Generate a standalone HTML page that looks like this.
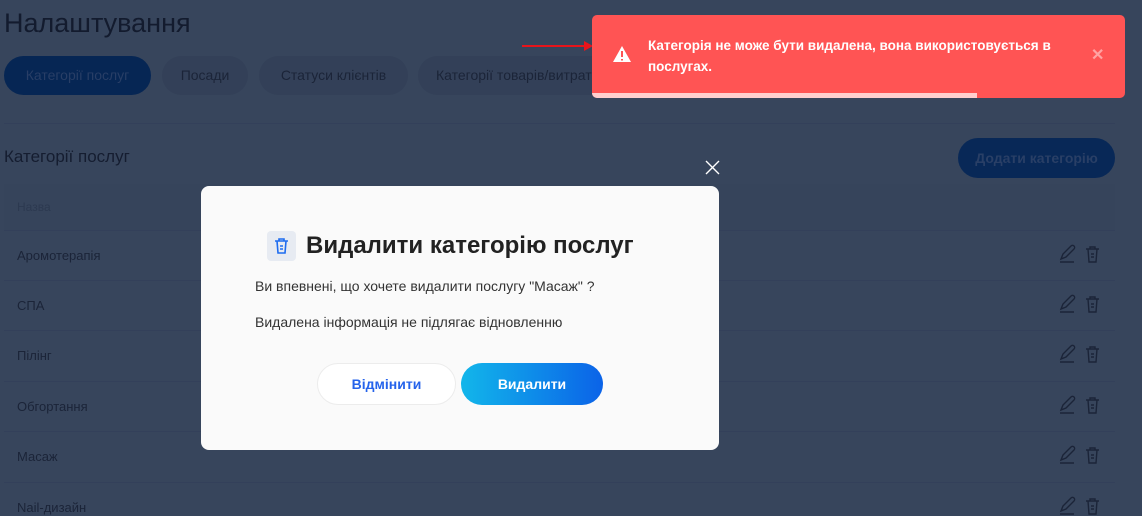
<!DOCTYPE html>
<html style="width:1142px;height:516px;overflow:hidden"><head><meta charset="utf-8"><style>
*{margin:0;padding:0;box-sizing:border-box}
body{width:1142px;height:516px;overflow:hidden;background:#37455c;font-family:"Liberation Sans",Roboto,sans-serif;position:relative;color:#1b2438}
.abs{position:absolute}
h1{position:absolute;left:4px;top:8px;font-size:27px;font-weight:normal;color:#131b2e}
.tab{position:absolute;top:56px;height:39px;border-radius:20px;background:#334058;font-size:14px;color:#1b2438;line-height:39px;text-align:center}
.row{position:absolute;left:4px;width:1111px;height:50px;border-top:1px solid #33405a;font-size:13px;line-height:50px;padding-left:13px;color:#1b2438}
</style></head><body>
<h1>Налаштування</h1>
<div class="tab" style="left:4px;width:147px;background:#062654;color:#283e66">Категорії послуг</div>
<div class="tab" style="left:162px;width:86px">Посади</div>
<div class="tab" style="left:259px;width:149px">Статуси клієнтів</div>
<div class="tab" style="left:418px;width:200px;text-align:left;padding-left:18px">Категорії товарів/витрат</div>
<div class="abs" style="left:4px;top:123px;width:1111px;height:1px;background:#33405a"></div>
<div class="abs" style="left:4px;top:147px;font-size:17px;color:#151d30">Категорії послуг</div>
<div class="abs" style="left:958px;top:138px;width:157px;height:40px;border-radius:20px;background:#082857;color:#293f66;font-size:14px;font-weight:bold;line-height:40px;text-align:center">Додати категорію</div>
<div class="row" style="top:184px;height:46px;line-height:46px;background:#36445b;color:#2c3950;font-size:12px;border-top:none">Назва</div>
<div class="row" style="top:230px">Аромотерапія</div>
<div class="row" style="top:280px">СПА</div>
<div class="row" style="top:330px">Пілінг</div>
<div class="row" style="top:381px">Обгортання</div>
<div class="row" style="top:431px">Масаж</div>
<div class="row" style="top:482px">Nail-дизайн</div>
<svg class="abs" style="left:1055px;top:240px" width="50" height="276" viewBox="0 0 50 276" fill="none" stroke="#1b2438" stroke-width="1.4">
<g id="ic"><path d="M5 22h14M6 19l2-5 8-8a2 2 0 0 1 3 3l-8 8-5 2z"/><path d="M31 9h13M35 9V7h5v2M33 9l1 13h7l1-13M36 14h3M36 17h3"/></g>
<use href="#ic" y="50"/><use href="#ic" y="100"/><use href="#ic" y="151"/><use href="#ic" y="201"/><use href="#ic" y="252"/>
</svg>
<div class="abs" style="left:522px;top:45px;width:66px;height:2px;background:#e8141b"></div>
<div class="abs" style="left:584px;top:41px;width:0;height:0;border-left:9px solid #e8141b;border-top:5px solid transparent;border-bottom:5px solid transparent"></div>
<div class="abs" style="left:592px;top:15px;width:533px;height:83px;border-radius:5px;background:#ff5454;overflow:hidden">
<svg class="abs" style="left:20px;top:30px" width="20" height="18" viewBox="0 0 20 18"><path d="M10 1L19 17H1z" fill="#fff"/><path d="M10 6v6M10 14v1.5" stroke="#ff5454" stroke-width="2"/></svg>
<div class="abs" style="left:56px;top:20px;width:420px;color:#fff;font-size:13.5px;font-weight:bold;line-height:21px">Категорія не може бути видалена, вона використовується в послугах.</div>
<div class="abs" style="left:499px;top:30px;color:#ffa3a3;font-size:16px;font-weight:bold">✕</div>
<div class="abs" style="left:0;top:78px;width:385px;height:5px;background:#ffcfcf"></div>
</div>
<svg class="abs" style="left:705px;top:160px" width="15" height="15" viewBox="0 0 15 15" stroke="#fff" stroke-width="1.4"><path d="M1 1l13 13M14 1L1 14"/></svg>
<div class="abs" style="left:201px;top:186px;width:518px;height:264px;background:#fafafa;border-radius:8px">
<div class="abs" style="left:66px;top:45px;width:29px;height:30px;border-radius:4px;background:#e7ebf2"></div>
<svg class="abs" style="left:71px;top:50px" width="19" height="20" viewBox="0 0 19 20" fill="none" stroke="#1e6cf0" stroke-width="1.6"><path d="M3 5h13M7 5V3h5v2M5 5l1 12h7l1-12M8 10h3M8 13h3"/></svg>
<div class="abs" style="left:105px;top:46px;font-size:24px;font-weight:bold;color:#222;white-space:nowrap">Видалити категорію послуг</div>
<div class="abs" style="left:54px;top:92px;font-size:14px;color:#333">Ви впевнені, що хочете видалити послугу "Масаж" ?</div>
<div class="abs" style="left:54px;top:128px;font-size:14px;color:#333">Видалена інформація не підлягає відновленню</div>
<div class="abs" style="left:116px;top:177px;width:139px;height:42px;border-radius:21px;background:#fff;border:1px solid #ececec;color:#2563eb;font-size:14px;font-weight:bold;text-align:center;line-height:40px">Відмінити</div>
<div class="abs" style="left:260px;top:177px;width:142px;height:42px;border-radius:21px;background:linear-gradient(90deg,#12b6ea,#0b63e8);color:#fff;font-size:14px;font-weight:bold;text-align:center;line-height:42px">Видалити</div>
</div>
</body></html>
